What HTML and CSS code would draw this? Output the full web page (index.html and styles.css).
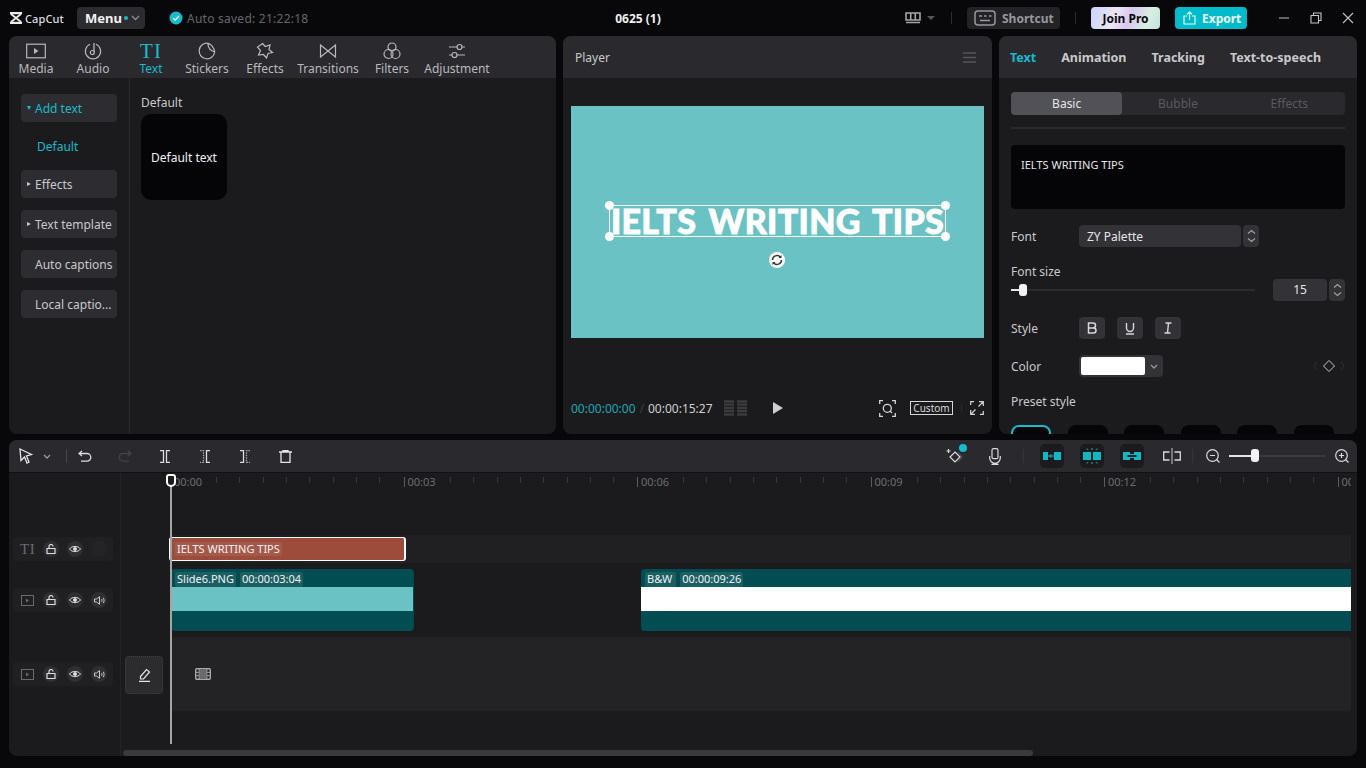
FILE: index.html
```html
<!DOCTYPE html>
<html lang="en">
<head>
    <meta charset="UTF-8">
    <title>CapCut</title>
    <link rel="stylesheet" href="styles.css">
</head>
<body>

<header class="topbar">
    <div class="top-left">
        <svg class="logo" width="14" height="12" viewBox="0 0 14 12"><path d="M1 1.200h12M1 10.800h12" stroke="#ececee" stroke-width="2.200"/><path d="M2 2l10 8M12 2L2 10" stroke="#ececee" stroke-width="1.800"/></svg>
        <span class="brand">CapCut</span>
        <button class="menu-btn">Menu<i class="dot"></i><svg width="9" height="6" viewBox="0 0 9 6"><path d="M1 1l3.500 3.500L8 1" fill="none" stroke="#8a8a8e" stroke-width="1.400"/></svg></button>
        <svg class="saved-ic" width="14" height="14" viewBox="0 0 14 14"><circle cx="7" cy="7" r="6.500" fill="#16bccb"/><path d="M4 7.200l2.200 2L10 5" fill="none" stroke="#fff" stroke-width="1.300"/></svg>
        <span class="saved">Auto saved: 21:22:18</span>
    </div>
    <div class="title">0625 (1)</div>
    <div class="top-right">
        <svg width="16" height="12" viewBox="0 0 16 12"><path d="M1 1h14v7H1zM5.700 1v7M10.300 1v7M1 10.500h14" fill="none" stroke="#a5a5a8" stroke-width="1.600"/></svg>
        <svg class="caret" width="8" height="4" viewBox="0 0 8 4"><path d="M0 0h8L4 4z" fill="#56565a"/></svg>
        <i class="top-sep sep-a"></i>
        <button class="shortcut-btn">
            <svg width="22" height="16" viewBox="0 0 22 16"><rect x="1" y="1" width="20" height="14" rx="3" fill="none" stroke="#98989c" stroke-width="1.500"/><path d="M5 6h3M10 6h2.500M15 6h2.500M6 10.500h10" stroke="#98989c" stroke-width="1.500"/></svg>
            Shortcut
        </button>
        <i class="top-sep sep-b"></i>
        <button class="pro-btn">Join Pro</button>
        <button class="export-btn">
            <svg width="13" height="14" viewBox="0 0 13 14"><path d="M4 5H1v8h11V5H9M6.500 9V1M4 3.200L6.500 1 9 3.200" fill="none" stroke="#dff" stroke-width="1.200"/></svg>
            Export
        </button>
        <div class="win-controls">
            <svg width="12" height="12" viewBox="0 0 12 12"><path d="M1 6h10" stroke="#8d8d90" stroke-width="1.400"/></svg>
            <svg width="12" height="12" viewBox="0 0 12 12"><path d="M1 3.500h7.500V11H1zM3.500 3.500V1H11v7.500H8.500" fill="none" stroke="#c4c4c6" stroke-width="1.100"/></svg>
            <svg width="12" height="12" viewBox="0 0 12 12"><path d="M1 1l10 10M11 1L1 11" stroke="#c4c4c6" stroke-width="1.100"/></svg>
        </div>
    </div>
</header>

<main class="workspace">

    <section class="panel media-panel">
        <nav class="tool-tabs">
            <div class="tool-tab tab-media">
                <svg width="20" height="15" viewBox="0 0 20 15"><rect x=".7" y=".7" width="18.600" height="13.600" fill="none" stroke="#b9b9bc" stroke-width="1.200"/><path d="M8 4.500L12.500 7.500 8 10.500z" fill="#b9b9bc"/></svg>
                <span>Media</span>
            </div>
            <div class="tool-tab tab-audio">
                <svg width="18" height="18" viewBox="0 0 18 18"><path d="M12 2.200A7.600 7.600 0 1 1 6 2.200" fill="none" stroke="#b9b9bc" stroke-width="1.200"/><path d="M10 1v9" stroke="#b9b9bc" stroke-width="1.300"/><circle cx="8.300" cy="10.500" r="2" fill="none" stroke="#b9b9bc" stroke-width="1.200"/></svg>
                <span>Audio</span>
            </div>
            <div class="tool-tab tab-text active">
                <span class="ti-glyph">TI</span>
                <span>Text</span>
            </div>
            <div class="tool-tab tab-stickers">
                <svg width="18" height="18" viewBox="0 0 18 18"><path d="M10 1.300A7.800 7.800 0 1 0 16.700 10 8 8 0 0 1 10 1.300zM10 1.300c2.800.6 6 3.800 6.700 8.700" fill="none" stroke="#b9b9bc" stroke-width="1.200"/></svg>
                <span>Stickers</span>
            </div>
            <div class="tool-tab tab-effects">
                <svg width="18" height="18" viewBox="0 0 18 18"><path d="M6.500 1.500l2.700 3 4.800-1.500-1 4.500 3.500 3-4.500 1-1.500 4.500-3-3.500-5 .5 2-4.500L1.500 5z" fill="none" stroke="#b9b9bc" stroke-width="1.200"/></svg>
                <span>Effects</span>
            </div>
            <div class="tool-tab tab-transitions">
                <svg width="18" height="16" viewBox="0 0 18 16"><path d="M1.500 2v12L16.500 2v12z" fill="none" stroke="#b9b9bc" stroke-width="1.200"/></svg>
                <span>Transitions</span>
            </div>
            <div class="tool-tab tab-filters">
                <svg width="18" height="18" viewBox="0 0 18 18"><g fill="none" stroke="#b9b9bc" stroke-width="1.200"><circle cx="9" cy="5" r="4"/><circle cx="5.500" cy="12" r="4.500"/><circle cx="12.500" cy="12" r="4.500"/></g></svg>
                <span>Filters</span>
            </div>
            <div class="tool-tab tab-adjustment">
                <svg width="18" height="16" viewBox="0 0 18 16"><g fill="none" stroke="#b9b9bc" stroke-width="1.200"><path d="M1 4h8M14 4h3M1 12h3M9 12h8"/><circle cx="11.500" cy="4" r="2.500"/><circle cx="6.500" cy="12" r="2.500"/></g></svg>
                <span>Adjustment</span>
            </div>
        </nav>
        <div class="media-body">
            <aside class="side-menu">
                <div class="side-btn current"><i class="tri-down"></i>Add text</div>
                <div class="side-sub">Default</div>
                <div class="side-btn"><i class="tri-right"></i>Effects</div>
                <div class="side-btn"><i class="tri-right"></i>Text template</div>
                <div class="side-btn plain">Auto captions</div>
                <div class="side-btn plain">Local captio...</div>
            </aside>
            <div class="text-list">
                <div class="list-title">Default</div>
                <div class="text-card">Default text</div>
            </div>
        </div>
    </section>

    <section class="panel player-panel">
        <div class="panel-head player-head">
            <span>Player</span>
            <svg width="13" height="11" viewBox="0 0 13 11"><path d="M0 1h13M0 5.500h13M0 10h13" stroke="#56565a" stroke-width="1.300"/></svg>
        </div>
        <div class="preview">
            <div class="sel-box">
                <span class="preview-text">IELTS WRITING TIPS</span>
                <i class="handle h-tl"></i><i class="handle h-tr"></i><i class="handle h-bl"></i><i class="handle h-br"></i>
            </div>
            <div class="rotate-btn">
                <svg width="12" height="12" viewBox="0 0 12 12"><path d="M1.500 6a4.500 4.500 0 0 1 7.800-3M10.500 6a4.500 4.500 0 0 1-7.800 3" fill="none" stroke="#333" stroke-width="1.500"/><path d="M10.500 1v3h-3zM1.500 11V8h3z" fill="#333"/></svg>
            </div>
        </div>
        <div class="player-ctrl">
            <span class="time-now">00:00:00:00</span>
            <span class="time-slash">/</span>
            <span class="time-total">00:00:15:27</span>
            <svg class="meter" width="23" height="16" viewBox="0 0 23 16"><path d="M0 1.500h10M13 1.500h10M0 4.700h10M13 4.700h10M0 8h10M13 8h10M0 11.200h10M13 11.200h10M0 14.500h10M13 14.500h10" stroke="#3c3c3f" stroke-width="2.300"/></svg>
            <svg class="play" width="10" height="12" viewBox="0 0 10 12"><path d="M0 0l10 6-10 6z" fill="#cfcfd1"/></svg>
            <svg class="scan" width="17" height="17" viewBox="0 0 17 17"><g fill="none" stroke="#d6d6d8" stroke-width="1.300"><path d="M.7 4V.7H4M13 .7h3.300V4M.7 13v3.300H4M13 16.300h3.300V13"/><circle cx="8.300" cy="8.300" r="4"/><path d="M11 11l2 2"/></g></svg>
            <span class="custom">Custom</span>
            <i class="ctrl-sep"></i>
            <svg width="14" height="14" viewBox="0 0 14 14"><path d="M9 .7h4.300V5M13.300.7L8.500 5.500M5 13.300H.7V9M.7 13.300l4.800-4.800M.7 4V.7H4M13.300 10v3.300H10" fill="none" stroke="#d6d6d8" stroke-width="1.200"/></svg>
        </div>
    </section>

    <section class="panel props-panel">
        <div class="panel-head props-tabs">
            <span class="active">Text</span>
            <span>Animation</span>
            <span>Tracking</span>
            <span>Text-to-speech</span>
        </div>
        <div class="props-body">
            <div class="segments">
                <span class="seg on">Basic</span>
                <span class="seg">Bubble</span>
                <span class="seg">Effects</span>
            </div>
            <div class="props-rule"></div>
            <div class="text-input">IELTS WRITING TIPS</div>

            <div class="prop-row row-font">
                <label>Font</label>
                <div class="select">ZY Palette</div>
                <div class="stepper"><svg width="9" height="14" viewBox="0 0 9 14"><path d="M1 4.500L4.500 1.500 8 4.500M1 9.500l3.500 3 3.500-3" fill="none" stroke="#a0a0a3" stroke-width="1.200"/></svg></div>
            </div>

            <div class="size-label">Font size</div>
            <div class="prop-row row-size">
                <div class="slider"><i class="slider-fill"></i><i class="slider-thumb"></i></div>
                <div class="num-input">15</div>
                <div class="stepper"><svg width="9" height="14" viewBox="0 0 9 14"><path d="M1 4.500L4.500 1.500 8 4.500M1 9.500l3.500 3 3.500-3" fill="none" stroke="#a0a0a3" stroke-width="1.200"/></svg></div>
            </div>

            <div class="prop-row row-style">
                <label>Style</label>
                <div class="style-btn">
                    <svg width="10" height="12" viewBox="0 0 10 12"><path d="M1.500 1H6a2.500 2.500 0 0 1 0 5H1.500zM1.500 6H6.500a2.500 2.500 0 0 1 0 5H1.500z" fill="none" stroke="#d8d8da" stroke-width="1.500"/></svg>
                </div>
                <div class="style-btn">
                    <svg width="10" height="13" viewBox="0 0 10 13"><path d="M1.500 1v5a3.500 3.500 0 0 0 7 0V1M1 12h8" fill="none" stroke="#d8d8da" stroke-width="1.400"/></svg>
                </div>
                <div class="style-btn">
                    <svg width="8" height="12" viewBox="0 0 8 12"><path d="M1.500 1h6M.5 11h6M4.500 1l-1 10" fill="none" stroke="#d8d8da" stroke-width="1.400"/></svg>
                </div>
            </div>

            <div class="prop-row row-color">
                <label>Color</label>
                <div class="color-pick">
                    <i class="swatch"></i>
                    <svg width="8" height="5" viewBox="0 0 8 5"><path d="M1 1l3 3 3-3" fill="none" stroke="#9a9a9d" stroke-width="1.300"/></svg>
                </div>
                <svg class="keyframe" width="32" height="12" viewBox="0 0 32 12"><path d="M4 2L1 6l3 4M28 2l3 4-3 4" fill="none" stroke="#2c2c2f" stroke-width="1.100"/><path d="M16 .5L21.500 6 16 11.500 10.500 6z" fill="none" stroke="#c8c8ca" stroke-width="1"/></svg>
            </div>

            <div class="preset-label">Preset style</div>
            <div class="presets">
                <i class="preset sel"></i><i class="preset"></i><i class="preset"></i><i class="preset"></i><i class="preset"></i><i class="preset"></i>
            </div>
        </div>
    </section>
</main>

<section class="timeline">
    <div class="tl-toolbar">
        <div class="tl-tools">
            <svg class="t-cursor" width="14" height="16" viewBox="0 0 14 16"><path d="M1 1l11.500 5.500-5 1.500L10 14l-2 1-2.500-6L2 12.500z" fill="none" stroke="#e6e6e8" stroke-width="1.300"/></svg>
            <svg class="t-caret" width="8" height="5" viewBox="0 0 8 5"><path d="M1 1l3 3 3-3" fill="none" stroke="#9a9a9d" stroke-width="1.300"/></svg>
            <i class="tool-sep"></i>
            <svg class="t-undo" width="14" height="12" viewBox="0 0 14 12"><path d="M4 1L1 3.500 4 6M1 3.500h8a3.800 3.800 0 0 1 0 7.600H3" fill="none" stroke="#dcdcde" stroke-width="1.300"/></svg>
            <svg class="t-redo" width="14" height="12" viewBox="0 0 14 12"><path d="M10 1l3 2.500L10 6M13 3.500H5a3.800 3.800 0 0 0 0 7.600h6" fill="none" stroke="#424246" stroke-width="1.300"/></svg>
            <svg class="t-split" width="10" height="13" viewBox="0 0 10 13"><path d="M0 .7h3.500v11.600H0M10 .7H6.500v11.600H10" fill="none" stroke="#dcdcde" stroke-width="1.300"/></svg>
            <svg class="t-split" width="10" height="13" viewBox="0 0 10 13"><path d="M10 .7H6.500v11.600H10" fill="none" stroke="#dcdcde" stroke-width="1.300"/><path d="M0 .7h3.500v11.600H0" fill="none" stroke="#a8a8aa" stroke-width="1.300" stroke-dasharray="1.500 1"/></svg>
            <svg class="t-split" width="10" height="13" viewBox="0 0 10 13"><path d="M0 .7h3.500v11.600H0" fill="none" stroke="#dcdcde" stroke-width="1.300"/><path d="M10 .7H6.500v11.600H10" fill="none" stroke="#a8a8aa" stroke-width="1.300" stroke-dasharray="1.500 1"/></svg>
            <svg class="t-split" width="13" height="13" viewBox="0 0 13 13"><path d="M0 2h13M4 2V.6h5V2M2 2v10.300h9V2" fill="none" stroke="#e6e6e8" stroke-width="1.300"/></svg>
        </div>
        <div class="tl-tools-right">
            <div class="ai-btn">
                <svg width="17" height="17" viewBox="0 0 17 17"><path d="M9 4l5 5-5 5-5-5zM2.500 1v4M.5 3h4" fill="none" stroke="#dcdcde" stroke-width="1.200"/><path d="M12 4l4 5-4 5" fill="none" stroke="#5b5b5e" stroke-width="1"/></svg>
                <i class="ai-dot"></i>
            </div>
            <svg class="t-mic" width="12" height="17" viewBox="0 0 12 17"><rect x="3" y=".7" width="6" height="10" rx="1.500" fill="none" stroke="#dcdcde" stroke-width="1.200"/><path d="M.7 8v2a5.300 5.300 0 0 0 10.600 0V8M6 15v1.500M2.500 16.300h7" fill="none" stroke="#dcdcde" stroke-width="1.200"/></svg>
            <i class="tool-sep mic-sep"></i>
            <div class="snap-btn"><svg width="18" height="8" viewBox="0 0 18 8"><path d="M0 0h5v8H0zM11 0h7v8h-7z" fill="#10b8c6"/><path d="M5 4h6M8.500 2L6.500 4l2 2" fill="none" stroke="#10b8c6" stroke-width="1"/></svg></div>
            <div class="snap-btn"><svg width="18" height="16" viewBox="0 0 18 16"><path d="M0 4h8v8H0zM10 4h8v8h-8z" fill="#10b8c6"/><path d="M9 0v2M9 14v2M4 .5l1 1.500M14 .5l-1 1.500M4 15.500l1-1.500M14 15.500l-1-1.500" stroke="#10b8c6" stroke-width="1"/></svg></div>
            <div class="snap-btn"><svg width="18" height="8" viewBox="0 0 18 8"><path d="M0 0h7v8H0zM11 0h7v8h-7z" fill="#10b8c6"/><path d="M4 2.500h10v3H4z" fill="#1b1b1d" stroke="#10b8c6" stroke-width="1"/></svg></div>
            <svg class="t-mid" width="18" height="16" viewBox="0 0 18 16"><path d="M9 0v16" stroke="#a8a8aa" stroke-width="1.300"/><path d="M6.500 4H.7v8h5.800M11.500 4h5.800v8h-5.800" fill="none" stroke="#dcdcde" stroke-width="1.300"/></svg>
            <i class="tool-sep zoom-sep"></i>
            <svg class="t-zoom" width="14" height="14" viewBox="0 0 14 14"><circle cx="6.500" cy="6.500" r="5.800" fill="none" stroke="#dcdcde" stroke-width="1.200"/><path d="M4 6.500h5M10.500 10.500l3 3" stroke="#dcdcde" stroke-width="1.200"/></svg>
            <div class="zoom-slider"><i class="zoom-fill"></i><i class="zoom-thumb"></i></div>
            <svg class="t-zoom" width="14" height="14" viewBox="0 0 14 14"><circle cx="6.500" cy="6.500" r="5.800" fill="none" stroke="#dcdcde" stroke-width="1.200"/><path d="M4 6.500h5M6.500 4v5M10.500 10.500l3 3" stroke="#dcdcde" stroke-width="1.200"/></svg>
        </div>
    </div>

    <div class="tl-body">
        <div class="ruler">
            <div class="ruler-seg first"><span>00:00</span></div>
            <div class="ruler-seg"><span>00:03</span></div>
            <div class="ruler-seg"><span>00:06</span></div>
            <div class="ruler-seg"><span>00:09</span></div>
            <div class="ruler-seg"><span>00:12</span></div>
            <div class="ruler-seg last"><span>00</span></div>
        </div>

        <div class="track track-text">
            <div class="track-head">
                <span class="ti-glyph small">TI</span>
                <i class="round"><svg width="10" height="10" viewBox="0 0 10 10"><path d="M1 4.500h8V9.500H1zM3 4.500V2.500a2 2 0 0 1 4 0" fill="none" stroke="#ddd" stroke-width="1.200"/></svg></i>
                <i class="round"><svg width="12" height="8" viewBox="0 0 12 8"><path d="M.5 4C3 .5 9 .5 11.500 4 9 7.500 3 7.500.5 4z" fill="none" stroke="#ddd" stroke-width="1"/><circle cx="6" cy="4" r="2" fill="#ddd"/></svg></i>
                <i class="round dim"></i>
            </div>
            <div class="gutter"></div>
            <div class="lane text-lane">
                <div class="text-clip"><span class="chip">IELTS WRITING TIPS</span></div>
            </div>
        </div>

        <div class="track track-video">
            <div class="track-head">
                <svg class="head-ic" width="13" height="11" viewBox="0 0 13 11"><rect x=".5" y=".5" width="12" height="10" fill="none" stroke="#6a6a6d"/><path d="M5 3.500l3 2-3 2z" fill="#6a6a6d"/></svg>
                <i class="round"><svg width="10" height="10" viewBox="0 0 10 10"><path d="M1 4.500h8V9.500H1zM3 4.500V2.500a2 2 0 0 1 4 0" fill="none" stroke="#ddd" stroke-width="1.200"/></svg></i>
                <i class="round"><svg width="12" height="8" viewBox="0 0 12 8"><path d="M.5 4C3 .5 9 .5 11.500 4 9 7.500 3 7.500.5 4z" fill="none" stroke="#ddd" stroke-width="1"/><circle cx="6" cy="4" r="2" fill="#ddd"/></svg></i>
                <i class="round"><svg width="11" height="9" viewBox="0 0 11 9"><path d="M.5 3h2L5.500.7v7.600L2.500 6h-2zM7.500 3c.6 1 .6 2 0 3M9.300 1.800c1 1.600 1 3.800 0 5.400" fill="none" stroke="#ddd" stroke-width=".9"/></svg></i>
            </div>
            <div class="gutter"></div>
            <div class="lane video-lane">
                <div class="clip clip-slide">
                    <div class="clip-label"><span class="chip">Slide6.PNG</span><span class="chip">00:00:03:04</span></div>
                    <div class="clip-strip"></div>
                </div>
                <div class="clip clip-bw">
                    <div class="clip-label"><span class="chip">B&amp;W</span><span class="chip">00:00:09:26</span></div>
                    <div class="clip-strip"></div>
                </div>
            </div>
        </div>

        <div class="track track-main">
            <div class="track-head">
                <svg class="head-ic" width="13" height="11" viewBox="0 0 13 11"><rect x=".5" y=".5" width="12" height="10" fill="none" stroke="#6a6a6d"/><path d="M5 3.500l3 2-3 2z" fill="#6a6a6d"/></svg>
                <i class="round"><svg width="10" height="10" viewBox="0 0 10 10"><path d="M1 4.500h8V9.500H1zM3 4.500V2.500a2 2 0 0 1 4 0" fill="none" stroke="#ddd" stroke-width="1.200"/></svg></i>
                <i class="round"><svg width="12" height="8" viewBox="0 0 12 8"><path d="M.5 4C3 .5 9 .5 11.500 4 9 7.500 3 7.500.5 4z" fill="none" stroke="#ddd" stroke-width="1"/><circle cx="6" cy="4" r="2" fill="#ddd"/></svg></i>
                <i class="round"><svg width="11" height="9" viewBox="0 0 11 9"><path d="M.5 3h2L5.500.7v7.600L2.500 6h-2zM7.500 3c.6 1 .6 2 0 3M9.300 1.800c1 1.600 1 3.800 0 5.400" fill="none" stroke="#ddd" stroke-width=".9"/></svg></i>
            </div>
            <div class="gutter">
                <div class="cover-btn"><svg width="13" height="14" viewBox="0 0 13 14"><path d="M2.500 8.500L8.500 1.500 11.500 4 5.500 11H2.500zM1 13.300h11" fill="none" stroke="#e6e6e8" stroke-width="1.200"/></svg></div>
            </div>
            <div class="lane main-lane">
                <svg width="16" height="12" viewBox="0 0 16 12"><rect x=".7" y=".7" width="14.600" height="10.600" rx="1" fill="none" stroke="#a8a8aa" stroke-width="1.400"/><path d="M4.200 1v10M11.800 1v10M1 4.300h3M1 7.700h3M12 4.300h3M12 7.700h3" stroke="#a8a8aa" stroke-width="1"/><path d="M5 1.500h6v9H5z" fill="#6a6a6d"/></svg>
            </div>
        </div>

        <div class="h-scroll"><i></i></div>
        <div class="playhead"><i></i></div>
    </div>
</section>

</body>
</html>
```

FILE: styles.css
```css
* { box-sizing: border-box; }
html, body { margin: 0; height: 100%; }
body {
    width: 1366px;
    height: 768px;
    overflow: hidden;
    background: #08080b;
    color: #c9c9cc;
    font-family: "Noto Sans", "Open Sans", sans-serif;
    font-size: 12px;
}
button { font-family: inherit; border: 0; padding: 0; }
i { display: block; }

/* top bar */
.topbar { display: flex; align-items: center; height: 36px; }
.top-left { display: flex; align-items: center; flex: 0 0 613px; padding-left: 9px; }
.brand { margin-left: 2px; width: 52px; font-size: 11px; font-weight: 500; color: #dedee0; letter-spacing: .1px; }
.menu-btn {
    display: flex; align-items: center;
    width: 68px; height: 22px; padding-left: 8px;
    background: #2b2b30; border-radius: 4px;
    color: #f2f2f4; font-size: 13px; font-weight: 700;
}
.menu-btn svg { margin-left: 3px; }
.dot { width: 4px; height: 4px; margin-left: 2px; border-radius: 50%; background: #16bccb; }
.saved-ic { margin-left: 24px; }
.saved { margin-left: 4px; color: #66666a; font-size: 12px; letter-spacing: .25px; }
.title { width: 50px; color: #f0f0f2; font-size: 12px; font-weight: 700; text-align: center; }
.top-right { display: flex; align-items: center; margin-left: 242px; }
.caret { margin-left: 6px; }
.top-sep { width: 1px; height: 12px; background: #2c2c30; }
.sep-a { margin: 0 15px 0 16px; }
.sep-b { margin: 0 15px; }
.shortcut-btn {
    display: flex; align-items: center; gap: 6px;
    width: 93px; height: 22px; padding-left: 7px;
    background: #232327; border-radius: 4px;
    color: #98989c; font-size: 12px; font-weight: 700;
}
.pro-btn {
    width: 69px; height: 22px; border-radius: 4px;
    background: linear-gradient(110deg, #c8d3fb 0%, #ebe6f4 35%, #d9c7ef 55%, #d8eee2 80%, #c3e4dd 100%);
    color: #08080b; font-size: 12px; font-weight: 700;
}
.export-btn {
    display: flex; align-items: center; gap: 6px;
    width: 72px; height: 22px; margin-left: 15px; padding-left: 8px;
    background: #00bccb; border-radius: 4px;
    color: #f2fdfe; font-size: 12px; font-weight: 700;
}
.win-controls { display: flex; gap: 20px; margin-left: 31px; }

/* main panels */
.workspace {
    display: grid;
    grid-template-columns: 547px 429px 358px;
    gap: 7px;
    height: 398px;
    padding-left: 9px;
}
.panel { background: #1b1b1d; border-radius: 8px; overflow: hidden; }
.panel-head { display: flex; align-items: center; height: 42px; background: #29292e; }

/* left panel */
.tool-tabs { position: relative; height: 42px; background: #29292e; }
.tool-tab {
    position: absolute; top: 5px;
    display: flex; flex-direction: column; align-items: center;
    width: 70px; height: 36px;
    color: #b9b9bc; line-height: 15px;
}
.tool-tab svg, .tool-tab .ti-glyph { height: 20px; margin-bottom: 0; }
.tool-tab.active { color: #16bccb; }
.tab-media { left: -8px; }
.tab-audio { left: 49px; }
.tab-text { left: 107px; }
.tab-stickers { left: 163px; }
.tab-effects { left: 221px; }
.tab-transitions { left: 284px; }
.tab-filters { left: 348px; }
.tab-adjustment { left: 413px; }
.ti-glyph { font-family: "Liberation Serif", serif; font-size: 21px; line-height: 20px; letter-spacing: 1px; }
.ti-glyph.small { width: 15px; flex: none; color: #6a6a6d; font-size: 15px; line-height: 16px; letter-spacing: .5px; }

.media-body { display: flex; height: 356px; }
.side-menu {
    display: flex; flex-direction: column; gap: 12px;
    flex: 0 0 121px; padding: 16px 0 0 12px;
    border-right: 1px solid #29292d;
}
.side-btn {
    display: flex; align-items: center;
    width: 96px; height: 28px; padding-left: 6px;
    background: #2c2c31; border-radius: 4px;
    white-space: nowrap; overflow: hidden;
}
.side-btn.current { color: #16bccb; }
.side-btn.plain { padding-left: 14px; }
.tri-down { margin-right: 4px; border: 2.500px solid transparent; border-top: 4px solid #16bccb; border-bottom: 0; }
.tri-right { margin-right: 4px; border: 2.500px solid transparent; border-left: 4px solid #c9c9cc; border-right: 0; }
.side-sub { height: 28px; margin: -2px 0; padding-left: 16px; color: #16bccb; line-height: 30px; }
.text-list { padding: 15px 0 0 11px; }
.list-title { height: 21px; line-height: 20px; }
.text-card {
    display: flex; align-items: center; justify-content: center;
    width: 86px; height: 86px;
    background: #050507; border-radius: 10px;
    color: #f2f2f4; font-size: 12px;
}

/* player */
.player-head { justify-content: space-between; padding: 0 16px 0 12px; }
.preview {
    position: relative;
    height: 232px; margin: 28px 8px 0;
    background: #6bc2c4;
}
.sel-box {
    position: absolute; left: 38px; top: 99px;
    display: flex; align-items: center; justify-content: center;
    width: 337px; height: 32px;
    border: 1px solid #fff;
}
.preview-text {
    color: #fff;
    font-family: "Lato", sans-serif;
    font-size: 34px; font-weight: 900;
    letter-spacing: .3px; word-spacing: 4px; white-space: nowrap;
    line-height: 30px;
    -webkit-text-stroke: .8px #fff;
}
.handle { position: absolute; width: 9px; height: 9px; background: #fff; border-radius: 50%; }
.h-tl { left: -5px; top: -5px; }
.h-tr { right: -5px; top: -5px; }
.h-bl { left: -5px; bottom: -5px; }
.h-br { right: -5px; bottom: -5px; }
.rotate-btn {
    position: absolute; left: 198px; top: 146px;
    display: flex; align-items: center; justify-content: center;
    width: 16px; height: 16px;
    background: #fff; border-radius: 50%;
}
.player-ctrl { display: flex; align-items: center; height: 22px; margin: 59px 8px 0; font-size: 12px; }
.time-now { color: #16a8b6; width: 65px; }
.time-slash { width: 12px; color: #3c3c3f; text-align: center; }
.time-total { color: #cfcfd1; width: 65px; }
.meter { margin-left: 11px; }
.play { margin-left: 26px; }
.scan { margin-left: 96px; }
.custom {
    margin-left: 14px; width: 43px; height: 14px;
    border: 1px solid #d6d6d8;
    color: #d6d6d8; font-size: 10px; line-height: 12px; text-align: center;
}
.ctrl-sep { width: 1px; height: 8px; margin: 0 8px 0 8px; background: #2c2c30; }

/* right panel */
.props-tabs { padding-left: 11px; gap: 25px; font-size: 12.500px; font-weight: 700; color: #c9c9cc; }
.props-tabs .active { color: #16bccb; }
.props-body { padding: 14px 12px; }
.segments { display: flex; height: 23px; background: #29292e; border-radius: 4px; }
.seg { flex: 1; color: #5a5a5e; font-size: 12px; line-height: 23px; text-align: center; border-radius: 4px; }
.seg.on { background: #515157; color: #e6e6e8; }
.props-rule { height: 2px; margin: 12px 0 16px; background: #29292e; }
.text-input {
    height: 64px; padding: 12px 10px;
    background: #050507; border-radius: 4px;
    color: #e6e6e8; font-size: 11px; line-height: 16px;
}
.prop-row { display: flex; align-items: center; height: 22px; }
.prop-row label { flex: 0 0 68px; }
.row-font { margin-top: 16px; }
.select {
    width: 162px; height: 22px; padding-left: 8px;
    background: #323237; border-radius: 4px;
    color: #e6e6e8; line-height: 24px;
}
.stepper {
    display: flex; align-items: center; justify-content: center;
    width: 16px; height: 22px; margin-left: 2px;
    background: #323237; border-radius: 4px;
}
.size-label { height: 16px; margin-top: 16px; line-height: 18px; }
.slider { position: relative; width: 244px; height: 2px; background: #2c2c30; }
.slider-fill { width: 12px; height: 2px; background: #e6e6e8; }
.slider-thumb { position: absolute; left: 8px; top: -5px; width: 8px; height: 12px; background: #f2f2f4; border-radius: 3px; }
.num-input {
    width: 54px; height: 22px; margin-left: 18px;
    background: #323237; border-radius: 4px;
    color: #e6e6e8; line-height: 22px; text-align: center;
}
.row-style { margin-top: 16px; }
.style-btn {
    display: flex; align-items: center; justify-content: center;
    width: 26px; height: 22px; margin-right: 12px;
    background: #323237; border-radius: 4px;
}
.row-color { margin-top: 16px; }
.color-pick {
    display: flex; align-items: center; gap: 5px;
    width: 84px; height: 22px; padding-left: 2px;
    background: #323237; border-radius: 4px;
}
.swatch { width: 64px; height: 18px; background: #fff; border-radius: 2px; }
.keyframe { margin-left: auto; }
.preset-label { height: 16px; margin-top: 16px; line-height: 18px; }
.presets { display: flex; justify-content: space-between; width: 323px; margin-top: 16px; }
.preset { width: 40px; height: 40px; background: #050507; border-radius: 8px; }
.preset.sel { border: 2px solid #16bccb; }

/* timeline */
.timeline {
    width: 1348px; height: 316px; margin: 6px 0 0 9px;
    background: #1b1b1d; border-radius: 8px; overflow: hidden;
}
.tl-toolbar {
    display: flex; align-items: center; justify-content: space-between;
    height: 33px; background: #29292e;
    border-bottom: 1px solid #111113;
}
.tl-tools { display: flex; align-items: center; padding-left: 10px; }
.t-caret { margin-left: 10px; }
.tool-sep { width: 1px; height: 14px; background: #47474b; }
.tl-tools .tool-sep { margin: 0 11px 0 15px; }
.t-redo { margin-left: 26px; }
.t-split { margin-left: 30px; }
.t-redo + .t-split { margin-left: 28px; }
.t-split:last-child { margin-left: 29px; }
.tl-tools-right { display: flex; align-items: center; padding-right: 8px; }
.ai-btn { position: relative; width: 17px; height: 17px; }
.ai-dot { position: absolute; right: -4px; top: -4px; width: 8px; height: 8px; background: #16bccb; border-radius: 50%; }
.t-mic { margin-left: 26px; }
.tl-tools-right .mic-sep { margin: 0 16px 0 22px; background: #35353a; }
.snap-btn {
    display: flex; align-items: center; justify-content: center;
    width: 24px; height: 24px; margin-right: 16px;
    background: #1b1b1d; border-radius: 5px;
}
.t-mid { margin-left: 3px; }
.tl-tools-right .zoom-sep { margin: 0 13px 0 11px; background: #35353a; }
.zoom-slider { position: relative; width: 96px; height: 2px; margin: 0 10px 0 9px; background: #3a3a3e; }
.zoom-fill { width: 26px; height: 2px; background: #e6e6e8; }
.zoom-thumb { position: absolute; left: 22px; top: -6px; width: 8px; height: 13px; background: #f2f2f4; border-radius: 3px; }

.tl-body { position: relative; height: 283px; }
.tl-body::before { content: ""; position: absolute; left: 111px; top: 0; bottom: 0; width: 1px; background: #242427; }
.ruler { display: flex; height: 62px; padding-left: 161px; color: #6c6c70; font-size: 11px; }
.ruler-seg {
    flex: 0 0 233.500px; height: 10px; margin-top: 4px; padding-left: 3px;
    border-left: 1px solid #5c5c60;
    line-height: 10px;
    background: repeating-linear-gradient(90deg, #38383c 0 1px, transparent 1px 23.350px) 45px 0 / 164px 6px no-repeat;
}
.ruler-seg.first { border-left-color: transparent; }
.ruler-seg.last { flex-basis: 13px; background: none; overflow: hidden; }

.track { display: grid; grid-template-columns: 112px 50px 1180px; }
.track-head {
    display: flex; align-items: center; gap: 8px;
    align-self: center;
    width: 100px; height: 24px; margin-left: 4px; padding-left: 7px;
    background: #202023; border-radius: 4px;
}
.head-ic { width: 15px; flex: none; }
.round {
    display: flex; align-items: center; justify-content: center;
    flex: none; width: 16px; height: 16px;
    background: #2f2f33; border-radius: 50%;
}
.round.dim { background: #242427; }
.track-text { height: 28px; }
.text-lane { display: flex; align-items: center; background: #202023; }
.text-clip {
    display: flex; align-items: center;
    width: 237px; height: 24px; margin-left: -2px; padding-left: 4px;
    background: #9d4b3a; border: 1px solid #fff; border-left-width: 2px; border-right-width: 2px; border-radius: 3px;
}
.chip {
    padding: 0 2px; border-radius: 2px;
    background: rgba(255, 255, 255, .1);
    color: #f2f2f4; font-size: 11px; line-height: 14px; white-space: nowrap;
}
.text-clip .chip { background: rgba(255, 255, 255, .08); }
.track-video { height: 62px; margin-top: 6px; }
.video-lane { display: flex; }
.clip { height: 62px; background: #024d52; border-radius: 4px; overflow: hidden; }
.clip-slide { width: 243px; }
.clip-bw { flex: 1; margin-left: 227px; border-radius: 4px 0 0 4px; }
.clip-bw .chip:first-child { padding-right: 4px; }
.clip-label { display: flex; gap: 4px; height: 18px; padding: 3px 0 0 4px; }
.clip-strip { height: 24px; margin-right: 1px; background: #6bc2c4; }
.clip-bw .clip-strip { margin-right: 0; background: #fff; }
.track-main { height: 74px; margin-top: 6px; }
.main-lane { display: flex; align-items: center; padding-left: 24px; background: #232325; border-radius: 4px; }
.cover-btn {
    display: flex; align-items: center; justify-content: center;
    width: 38px; height: 38px; margin: 19px 0 0 4px;
    background: #2c2c2e; border: 1px dotted #3e3e41; border-radius: 4px;
}

.h-scroll { position: absolute; left: 114px; top: 277px; width: 910px; height: 6px; }
.h-scroll i { height: 6px; background: #3a3a3e; border-radius: 3px; }
.playhead { position: absolute; left: 161px; top: 1px; width: 2px; height: 270px; background: #a5a5a8; }
.playhead i { position: absolute; left: -4px; top: 0; width: 10px; height: 13px; background: #1b1b1d; border: 2px solid #fff; border-radius: 3px 3px 5px 5px; }
```
